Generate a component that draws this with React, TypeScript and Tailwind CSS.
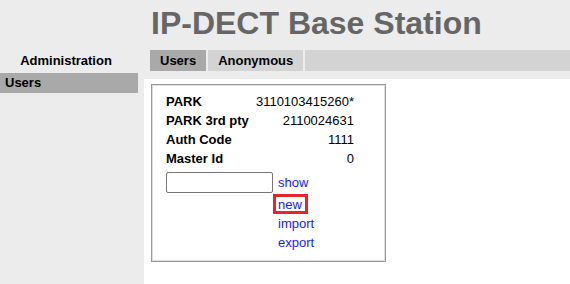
import React from "react";

const rows: [string, string][] = [
  ["PARK", "3110103415260*"],
  ["PARK 3rd pty", "2110024631"],
  ["Auth Code", "1111"],
  ["Master Id", "0"],
];

export default function App() {
  return (
    <div
      className="flex h-[284px] w-[570px] overflow-hidden bg-[#ececec] text-[13px] text-black"
      style={{ fontFamily: '"Liberation Sans", Arial, sans-serif' }}
    >
      {/* Sidebar */}
      <div className="flex w-[138px] shrink-0 flex-col pt-[50px]">
        <div className="h-[21px] pr-[6px] text-center font-bold leading-[21px]">
          Administration
        </div>
        <div className="mt-[2px] h-[20px] bg-[#a9a9a9] pl-[5px] font-bold leading-[20px]">
          Users
        </div>
      </div>

      {/* Main */}
      <div className="ml-[6px] flex flex-1 flex-col">
        <div className="h-[50px] pl-[7px] pt-[7px]">
          <h1 className="text-[32px] font-bold leading-[32px] text-[#666666]">
            IP-DECT Base Station
          </h1>
        </div>
        <div className="ml-[6px] flex h-[21px] gap-[2px] font-bold leading-[21px]">
          <div className="bg-[#a9a9a9] px-[10px]">Users</div>
          <div className="bg-[#d3d3d3] px-[10px]">Anonymous</div>
          <div className="flex-1 bg-[#d3d3d3]" />
        </div>
        <div className="mt-[8px] flex-1 bg-white pl-[7px] pt-[5px]">
          <div className="h-[178px] w-[235px] border border-[#9a9a9a] pl-[14px] pt-[7px] shadow-[inset_1px_1px_0_#dedede,inset_-1px_-1px_0_#dedede]">
            <div className="grid w-[188px] grid-cols-[1fr_auto] leading-[19px]">
              {rows.map(([k, v]) => (
                <React.Fragment key={k}>
                  <div className="font-bold">{k}</div>
                  <div className="text-right">{v}</div>
                </React.Fragment>
              ))}
            </div>
            <div className="mt-[4px] flex h-[22px] items-start">
              <input
                type="text"
                className="h-[21px] w-[107px] rounded-[2px] border border-[#767676] bg-white outline-none"
              />
              <span className="ml-[5px] mt-[1px] leading-[19px] text-[#1a1aff]">show</span>
            </div>
            <div className="ml-[112px] mt-[1px] flex flex-col leading-[19px] text-[#1a1aff]">
              <span className="relative self-start">
                new
                <span className="absolute -left-[5px] -right-[6px] -top-[1px] bottom-0 border-[3px] border-[#e3262b]" />
              </span>
              <span>import</span>
              <span>export</span>
            </div>
          </div>
        </div>
      </div>
    </div>
  );
}
